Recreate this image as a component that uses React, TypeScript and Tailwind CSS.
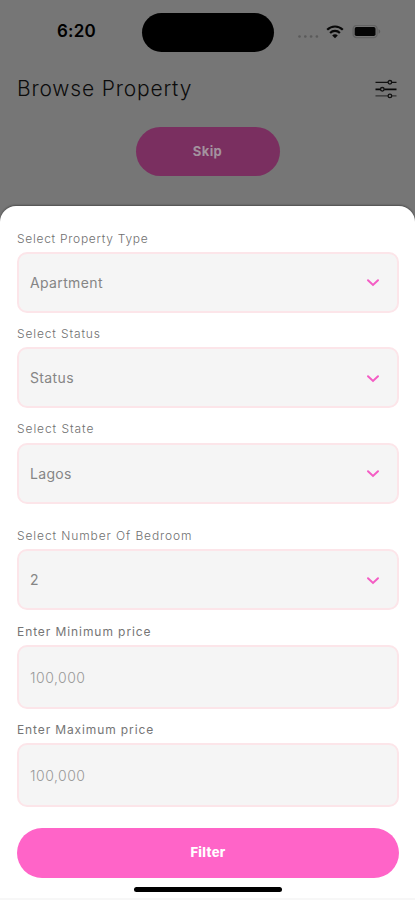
import { useState } from 'react';
import type { ReactNode } from 'react';
import clsx from 'clsx';

const selectFields = [
  { id: 'type', label: 'Select Property Type', value: 'Apartment', labelClass: 'tracking-[0.72px]', valueClass: 'tracking-[0.36px]' },
  { id: 'status', label: 'Select Status', value: 'Status', labelClass: 'tracking-[0.86px]', valueClass: 'tracking-[0.36px]' },
  { id: 'state', label: 'Select State', value: 'Lagos', labelClass: 'tracking-[0.92px]', valueClass: 'tracking-[0.3px]' },
  { id: 'bedroom', label: 'Select Number Of Bedroom', value: '2', labelClass: 'tracking-[0.9px]', valueClass: '', spaced: true },
];

interface FieldProps {
  label: string;
  labelClass?: string;
  spaced?: boolean;
  children: ReactNode;
}

function Field({ label, labelClass, spaced, children }: FieldProps) {
  return (
    <label className={clsx('block', spaced ? 'pt-[23px]' : 'pt-3')}>
      <span className={clsx('mb-[4.4px] block h-[18px] text-[12px] leading-[18px] whitespace-nowrap', labelClass)}>
        {label}
      </span>
      {children}
    </label>
  );
}

function SelectBox({ value, className }: { value: string; className?: string }) {
  return (
    <div className="flex h-[61px] items-center justify-between rounded-[10px] border-2 border-[#fce5e9] bg-[#f5f5f5] pr-[17px] pl-[11px]">
      <span className={clsx('text-[14px] text-[#858585]', className)}>{value}</span>
      <svg width="14" height="10" viewBox="0 0 14 10" fill="none">
        <path d="M2 3.2L7 7.9L12 3.2" stroke="#f45cc4" strokeWidth="2" strokeLinecap="round" />
      </svg>
    </div>
  );
}

interface PriceInputProps {
  value: string;
  onChange: (value: string) => void;
}

function PriceInput({ value, onChange }: PriceInputProps) {
  return (
    <input
      type="text"
      value={value}
      placeholder="100,000"
      onChange={(e) => onChange(e.target.value)}
      className="block h-[63.6px] w-full rounded-[10px] border-2 border-[#fce5e9] bg-[#f5f5f5] px-[11px] pt-px text-[14px] font-light tracking-[0.5px] outline-none placeholder:text-[#999]"
    />
  );
}

function StatusBar() {
  return (
    <div className="flex h-[64px] items-center">
      <div className="w-[142px] pl-[57px] text-[17px] font-semibold tracking-[0.2px]">6:20</div>
      <div className="h-[39px] w-[132px] rounded-full bg-black" />
      <div className="flex flex-1 items-center pl-[23px]">
        <svg width="22" height="4" viewBox="0 0 22 4" fill="#5a5a5a" className="mt-[9px]">
          <circle cx="2.5" cy="1.5" r="1.3" />
          <circle cx="8.3" cy="1.5" r="1.3" />
          <circle cx="14.1" cy="1.5" r="1.3" />
          <circle cx="19.9" cy="1.5" r="1.3" />
        </svg>
        {/* Wifi */}
        <svg width="18" height="14" viewBox="0 0 18 14" fill="none" className="ml-[7px]">
          <path d="M1.2 4.8C5.5 0.4 12.5 0.4 16.8 4.8" stroke="#080808" strokeWidth="2.2" />
          <path d="M4.1 8C6.8 5.2 11.2 5.2 13.9 8" stroke="#080808" strokeWidth="2.1" />
          <path d="M6.2 10.4C7.8 8.9 10.2 8.9 11.8 10.4L9 13.3Z" fill="#080808" />
        </svg>
        {/* Battery */}
        <svg width="30" height="14" viewBox="0 0 30 14" fill="none" className="ml-[8px]">
          <rect x="1.1" y="0.4" width="24" height="12.2" rx="3.6" stroke="#636363" strokeWidth="1.3" />
          <rect x="2.7" y="2" width="20.8" height="9" rx="1.8" fill="#050505" />
          <path d="M26.6 4.3C28.8 5.1 28.8 7.9 26.6 8.7Z" fill="#5c5c5c" />
        </svg>
      </div>
    </div>
  );
}

function TuneIcon() {
  return (
    <svg width="22" height="20" viewBox="0 0 22 20" fill="none" stroke="#111" strokeWidth="1.3">
      <path d="M0.5 3.3H13M16.8 3.3H21.5" />
      <circle cx="14.9" cy="3.3" r="1.8" />
      <path d="M0.5 10.3H5.4M9.2 10.3H21.5" stroke="#080808" strokeWidth="1.7" />
      <circle cx="7.3" cy="10.3" r="1.8" />
      <path d="M0.5 16.9H13M16.8 16.9H21.5" stroke="#333" />
      <circle cx="14.9" cy="16.9" r="1.8" />
    </svg>
  );
}

export default function App() {
  const [minPrice, setMinPrice] = useState('');
  const [maxPrice, setMaxPrice] = useState('');

  return (
    <div className="flex h-[900px] w-full flex-col overflow-hidden bg-[#767676] font-['Inter',sans-serif] text-black">
      <StatusBar />

      <div className="flex h-[50px] items-center justify-between pr-[18px] pl-[17px]">
        <h1 className="text-[21px] font-light tracking-[0.82px] whitespace-nowrap text-[#0c0c0c]">Browse Property</h1>
        <TuneIcon />
      </div>

      <button className="mx-auto mt-[13px] h-[49px] w-[144px] shrink-0 rounded-full bg-[#7a2f60] text-[13px] font-bold tracking-[0.4px] text-[#a3929e]">
        Skip
      </button>

      {/* Filter sheet */}
      <div className="mt-[30px] flex flex-1 flex-col rounded-t-[16px] border-b-2 border-[#f7f7f7] bg-white pt-[11.5px] pr-4 pl-[17px] shadow-[0_-1px_2px_rgba(0,0,0,0.35)]">
        {selectFields.map((field) => (
          <Field
            key={field.id}
            label={field.label}
            labelClass={clsx('font-light text-[#707070]', field.labelClass)}
            spaced={field.spaced}
          >
            <SelectBox value={field.value} className={field.valueClass} />
          </Field>
        ))}

        <div className="pt-[0.5px]">
          <Field label="Enter Minimum price" labelClass="text-[#757575] tracking-[0.92px]">
            <PriceInput value={minPrice} onChange={setMinPrice} />
          </Field>
          <Field label="Enter Maximum price" labelClass="text-[#757575] tracking-[0.88px]">
            <PriceInput value={maxPrice} onChange={setMaxPrice} />
          </Field>
        </div>

        <button className="mt-[21px] h-[50px] w-full shrink-0 rounded-full bg-[#ff64c8] text-[13px] font-extrabold tracking-[0.3px] text-white">
          Filter
        </button>
        <div className="mx-auto mt-[9px] h-[5px] w-[148px] shrink-0 rounded-full bg-black" />
      </div>
    </div>
  );
}
